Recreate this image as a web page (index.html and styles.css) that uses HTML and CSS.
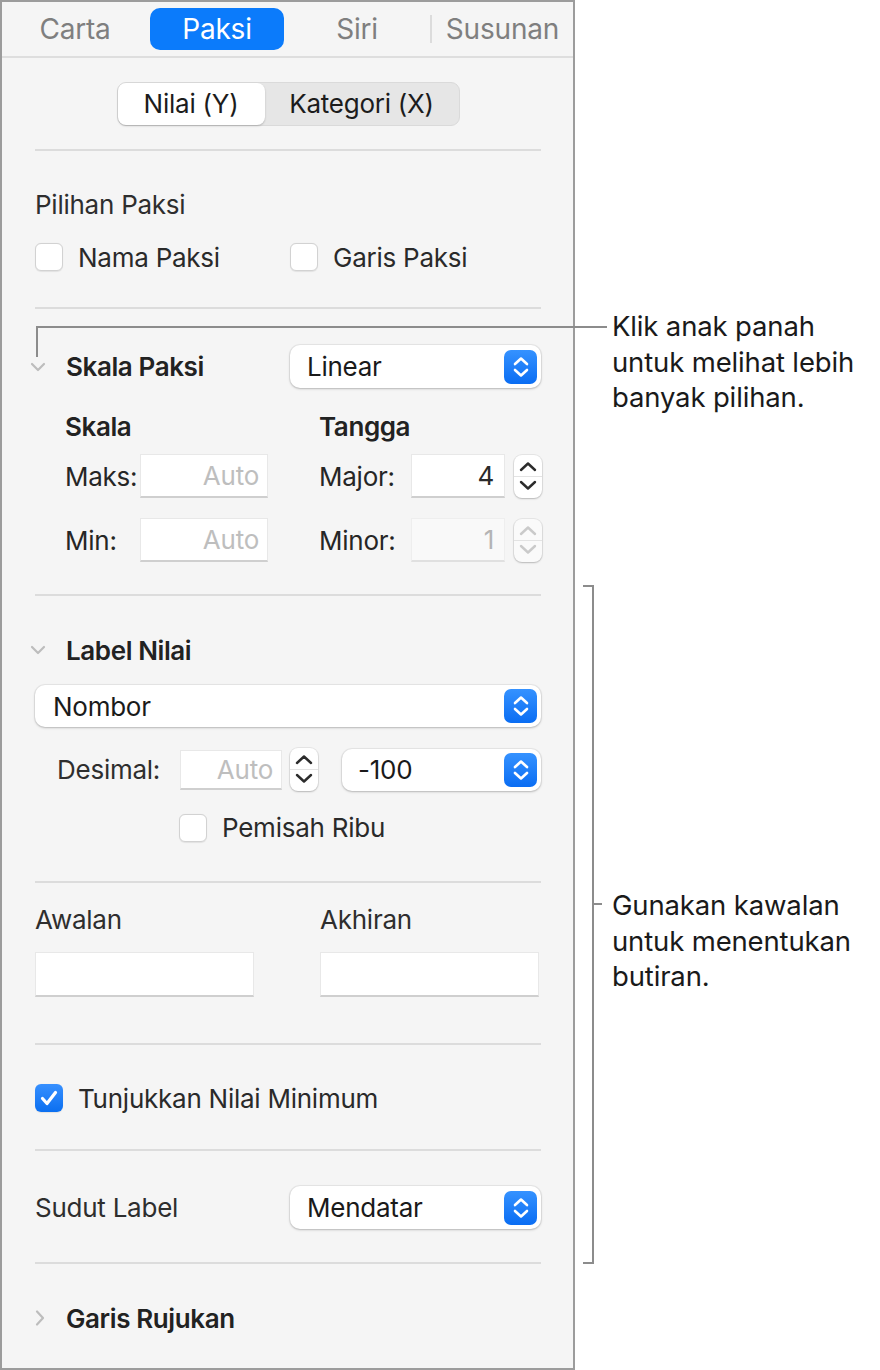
FILE: index.html
```html
<!DOCTYPE html>
<html lang="ms">
<head>
    <meta charset="UTF-8">
    <title>Paksi</title>
    <link rel="stylesheet" href="styles.css">
</head>
<body>
<div class="page">
    <aside class="inspector">
        <nav class="tabs">
            <div class="tab">Carta</div>
            <div class="tab tab-active">Paksi</div>
            <div class="tab">Siri</div>
            <div class="tab-sep"></div>
            <div class="tab tab-last">Susunan</div>
        </nav>

        <div class="inspector-body">
            <section class="group group-seg">
                <div class="segmented">
                    <div class="segment segment-on">Nilai (Y)</div>
                    <div class="segment">Kategori (X)</div>
                </div>
            </section>

            <section class="group group-options">
                <div class="label">Pilihan Paksi</div>
                <div class="check-grid">
                    <div class="check-row"><span class="checkbox"></span>Nama Paksi</div>
                    <div class="check-row"><span class="checkbox"></span>Garis Paksi</div>
                </div>
            </section>

            <section class="group group-scale">
                <div class="head-row">
                    <div class="disclosure">
                        <svg class="chev" width="16" height="12" viewBox="0 0 16 12"><path d="M2 3 L8 9 L14 3" /></svg>
                        <span class="head">Skala Paksi</span>
                    </div>
                    <div class="popup popup-scale">
                        <span>Linear</span>
                        <span class="popup-btn"><svg width="34" height="34" viewBox="0 0 34 34"><path d="M11 14 L17 8.5 L23 14 M11 20 L17 25.5 L23 20" /></svg></span>
                    </div>
                </div>
                <div class="scale-grid">
                    <div class="col-head">Skala</div>
                    <div class="col-head">Tangga</div>
                    <div class="field">
                        <span class="field-label w-left">Maks:</span>
                        <div class="input input-scale placeholder">Auto</div>
                    </div>
                    <div class="field">
                        <span class="field-label w-right">Major:</span>
                        <div class="input input-step">4</div>
                        <div class="stepper">
                            <svg width="28" height="43" viewBox="0 0 28 43"><path d="M7 15 L14 8.5 L21 15 M7 27 L14 33.5 L21 27" /></svg>
                        </div>
                    </div>
                    <div class="field">
                        <span class="field-label w-left">Min:</span>
                        <div class="input input-scale placeholder">Auto</div>
                    </div>
                    <div class="field">
                        <span class="field-label w-right">Minor:</span>
                        <div class="input input-step input-off">1</div>
                        <div class="stepper stepper-off">
                            <svg width="28" height="43" viewBox="0 0 28 43"><path d="M7 15 L14 8.5 L21 15 M7 27 L14 33.5 L21 27" /></svg>
                        </div>
                    </div>
                </div>
            </section>

            <section class="group group-labels">
                <div class="disclosure">
                    <svg class="chev" width="16" height="12" viewBox="0 0 16 12"><path d="M2 3 L8 9 L14 3" /></svg>
                    <span class="head">Label Nilai</span>
                </div>
                <div class="popup popup-wide">
                    <span>Nombor</span>
                    <span class="popup-btn"><svg width="34" height="34" viewBox="0 0 34 34"><path d="M11 14 L17 8.5 L23 14 M11 20 L17 25.5 L23 20" /></svg></span>
                </div>
                <div class="decimal-row">
                    <span class="label decimal-label">Desimal:</span>
                    <div class="input input-dec placeholder">Auto</div>
                    <div class="stepper stepper-dec">
                        <svg width="28" height="43" viewBox="0 0 28 43"><path d="M7 15 L14 8.5 L21 15 M7 27 L14 33.5 L21 27" /></svg>
                    </div>
                    <div class="popup popup-dec">
                        <span>-100</span>
                        <span class="popup-btn"><svg width="34" height="34" viewBox="0 0 34 34"><path d="M11 14 L17 8.5 L23 14 M11 20 L17 25.5 L23 20" /></svg></span>
                    </div>
                </div>
                <div class="check-row thousands"><span class="checkbox"></span>Pemisah Ribu</div>
            </section>

            <section class="group group-affix">
                <div class="affix-grid">
                    <div class="label">Awalan</div>
                    <div class="label">Akhiran</div>
                    <div class="input input-affix"></div>
                    <div class="input input-affix"></div>
                </div>
            </section>

            <section class="group group-min">
                <div class="check-row">
                    <span class="checkbox checkbox-on"><svg width="28" height="28" viewBox="0 0 28 28"><path d="M7.5 14.5 L12 19.5 L20.5 8.5" /></svg></span>
                    Tunjukkan Nilai Minimum
                </div>
            </section>

            <section class="group group-angle">
                <div class="angle-row">
                    <span class="label">Sudut Label</span>
                    <div class="popup popup-scale">
                        <span>Mendatar</span>
                        <span class="popup-btn"><svg width="34" height="34" viewBox="0 0 34 34"><path d="M11 14 L17 8.5 L23 14 M11 20 L17 25.5 L23 20" /></svg></span>
                    </div>
                </div>
            </section>

            <section class="group group-last">
                <div class="disclosure">
                    <svg class="chev" width="16" height="18" viewBox="0 0 16 18"><path d="M7 2.5 L13 9 L7 15.5" /></svg>
                    <span class="head">Garis Rujukan</span>
                </div>
            </section>
        </div>
    </aside>

    <!-- callouts -->
    <div class="leader-arrow"></div>
    <div class="note note-top">Klik anak panah<br>untuk melihat lebih<br>banyak pilihan.</div>
    <div class="bracket"></div>
    <div class="bracket-tick"></div>
    <div class="note note-mid">Gunakan kawalan<br>untuk menentukan<br>butiran.</div>
</div>
</body>
</html>
```

FILE: styles.css
```css
body {
    margin: 0;
    background: #fff;
    font-family: Inter, "Liberation Sans", sans-serif;
    color: #262626;
}

.page {
    position: relative;
    width: 880px;
    height: 1370px;
}

.inspector {
    box-sizing: border-box;
    width: 575px;
    height: 1370px;
    border: 2px solid #9c9c9c;
    background: #f5f5f5;
}

/* tabs */
.tabs {
    display: flex;
    align-items: center;
    height: 54px;
    border-bottom: 2px solid #dedede;
    font-size: 28px;
    letter-spacing: -0.2px;
}

.tab {
    width: 146px;
    text-align: center;
    color: #7f7f7f;
    line-height: 42px;
}

.tab-active {
    width: 134px;
    margin-left: 2px;
    background: #0b7bfb;
    color: #fff;
    border-radius: 10px;
}

.tab-sep {
    width: 2px;
    height: 28px;
    background: #dcdcdc;
}

.tab-last {
    flex: 1;
    width: auto;
}

/* groups */
.inspector-body {
    padding: 0 32px 0 33px;
}

.group {
    border-bottom: 2px solid #dcdcdc;
    font-size: 26px;
    letter-spacing: -0.25px;
}

.group-last {
    border-bottom: none;
    padding-top: 38px;
}

.label {
    line-height: 32px;
    color: #2e2e2e;
}

.head {
    font-weight: 600;
    color: #222;
    letter-spacing: -0.4px;
}

.group-seg {
    padding: 24px 0 23px;
    display: flex;
    justify-content: center;
}

.segmented {
    display: flex;
    height: 44px;
    background: #e6e6e6;
    border: 1px solid #dadada;
    border-radius: 9px;
    box-sizing: border-box;
}

.segment {
    width: 194px;
    text-align: center;
    line-height: 42px;
    color: #1c1c1c;
}

.segment-on {
    width: 147px;
    background: #fff;
    border-radius: 8px;
    box-shadow: 0 1px 2px rgba(0, 0, 0, 0.22);
}

.group-options {
    padding: 38px 0 35px;
}

.check-grid {
    display: grid;
    grid-template-columns: 255px 1fr;
    margin-top: 21px;
}

.check-row {
    display: flex;
    align-items: center;
    height: 30px;
    color: #2a2a2a;
}

.checkbox {
    box-sizing: border-box;
    width: 28px;
    height: 28px;
    margin-right: 15px;
    background: #fff;
    border: 1px solid #d2d2d2;
    border-radius: 6px;
    box-shadow: 0 0.5px 1px rgba(0, 0, 0, 0.08);
}

.checkbox-on {
    border: none;
    background: linear-gradient(#3790ff, #0b6ff0);
}

.checkbox-on path {
    fill: none;
    stroke: #fff;
    stroke-width: 3.2;
    stroke-linecap: round;
    stroke-linejoin: round;
}

/* disclosure rows */
.disclosure {
    display: flex;
    align-items: center;
    height: 32px;
}

.chev {
    margin-left: -5px;
    margin-right: 20px;
}

.chev path {
    fill: none;
    stroke: #bdbdbd;
    stroke-width: 2.2;
    stroke-linecap: round;
    stroke-linejoin: round;
}

.group-scale {
    padding: 36px 0 32px;
}

.head-row {
    display: flex;
    justify-content: space-between;
    align-items: center;
    height: 43px;
}

/* popup buttons */
.popup {
    box-sizing: border-box;
    display: flex;
    align-items: center;
    justify-content: space-between;
    height: 43px;
    padding: 0 4px 0 17px;
    background: #fff;
    border-radius: 10px;
    box-shadow: 0 0 0 1px rgba(0, 0, 0, 0.05), 0 1px 2.5px rgba(0, 0, 0, 0.22);
    color: #1a1a1a;
}

.popup-scale {
    width: 251px;
}

.popup-wide {
    height: 42px;
    margin-top: 19px;
    padding-left: 18px;
}

.popup-btn {
    display: block;
    width: 33px;
    height: 34px;
    border-radius: 7px;
    background: linear-gradient(#3592ff, #0a6df3);
}

.popup-btn path {
    fill: none;
    stroke: #fff;
    stroke-width: 2.6;
    stroke-linecap: round;
    stroke-linejoin: round;
}

/* scale fields */
.scale-grid {
    display: grid;
    grid-template-columns: 254px 1fr;
    grid-template-rows: 32px 55px 64px;
    align-items: end;
    margin-top: 23px;
    padding-left: 30px;
}

.col-head {
    font-weight: 600;
    line-height: 32px;
    color: #222;
    letter-spacing: -0.4px;
}

.field {
    display: flex;
    align-items: center;
    height: 44px;
}

.field-label {
    color: #262626;
}

.w-left {
    width: 75px;
}

.w-right {
    width: 92px;
}

.input {
    box-sizing: border-box;
    height: 44px;
    background: #fff;
    border: 1px solid #e8e8e8;
    border-bottom: 2px solid #cfcfcf;
    text-align: right;
    padding-right: 8px;
    line-height: 42px;
    color: #2a2a2a;
}

.placeholder {
    color: #bebebe;
}

.input-scale {
    width: 128px;
}

.input-step {
    width: 94px;
    padding-right: 10px;
}

.input-off {
    background: #f9f9f9;
    border-color: #eeeeee;
    border-bottom-color: #e0e0e0;
    color: #b4b4b4;
}

.stepper {
    box-sizing: border-box;
    width: 28px;
    height: 43px;
    margin-left: 9px;
    background: #fff;
    border-radius: 8px;
    box-shadow: 0 0 0 1px rgba(0, 0, 0, 0.06), 0 1px 2px rgba(0, 0, 0, 0.2);
    background-image: linear-gradient(transparent 21px, #e3e3e3 21px, #e3e3e3 22px, transparent 22px);
}

.stepper path {
    fill: none;
    stroke: #2c2c2c;
    stroke-width: 2.4;
    stroke-linecap: round;
    stroke-linejoin: round;
}

.stepper-off {
    background-color: #fafafa;
}

.stepper-off path {
    stroke: #cacaca;
}

/* value labels */
.group-labels {
    padding: 38px 0 39px;
}

.decimal-row {
    display: flex;
    align-items: center;
    height: 43px;
    margin-top: 21px;
    padding-left: 22px;
}

.decimal-label {
    width: 123px;
}

.input-dec {
    width: 102px;
    height: 40px;
    line-height: 38px;
}

.stepper-dec {
    margin-left: 8px;
}

.popup-dec {
    flex: 1;
    height: 42px;
    margin-left: 24px;
    padding-left: 16px;
}

.thousands {
    height: 29px;
    margin-top: 22px;
    padding-left: 144px;
}

.group-affix {
    padding: 21px 0 46px;
}

.affix-grid {
    display: grid;
    grid-template-columns: 219px 219px;
    column-gap: 66px;
    row-gap: 16px;
}

.input-affix {
    height: 45px;
}

.group-min {
    padding: 38px 0 36px;
}

.group-angle {
    padding: 35px 0 33px;
}

.angle-row {
    display: flex;
    justify-content: space-between;
    align-items: center;
}

/* callouts */
.leader-arrow {
    position: absolute;
    left: 36px;
    top: 326px;
    width: 569px;
    height: 29px;
    border-top: 2px solid #8c8c8c;
    border-left: 2px solid #8c8c8c;
}

.bracket {
    position: absolute;
    left: 583px;
    top: 585px;
    width: 9px;
    height: 675px;
    border: 2px solid #8c8c8c;
    border-left: none;
}

.bracket-tick {
    position: absolute;
    left: 594px;
    top: 903px;
    width: 8px;
    height: 2px;
    background: #8c8c8c;
}

.note {
    position: absolute;
    left: 612px;
    font-size: 27.5px;
    line-height: 35.5px;
    letter-spacing: -0.15px;
    color: #1a1a1a;
}

.note-top {
    top: 309px;
}

.note-mid {
    top: 888px;
}
```
